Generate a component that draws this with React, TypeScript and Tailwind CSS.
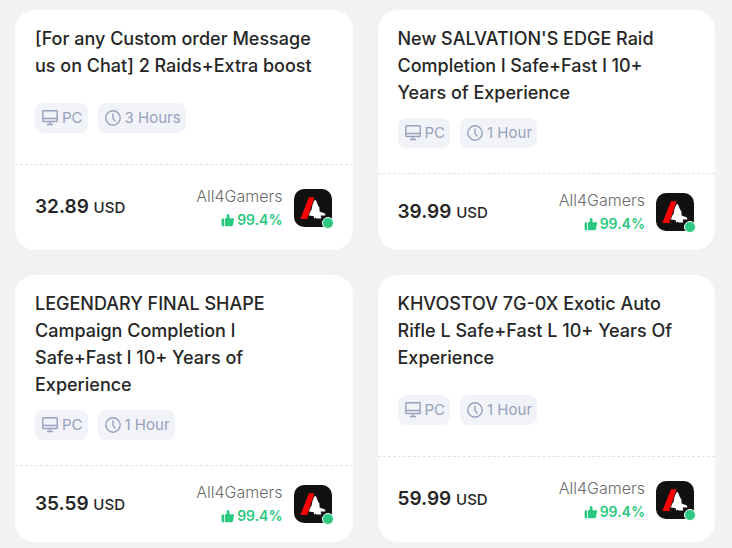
import type { ReactNode } from 'react';

interface Offer {
  title: string;
  delivery: string;
  price: string;
}

const OFFERS: Offer[] = [
  { title: '[For any Custom order Message us on Chat] 2 Raids+Extra boost', delivery: '3 Hours', price: '32.89' },
  { title: "New SALVATION'S EDGE Raid Completion l Safe+Fast l 10+ Years of Experience", delivery: '1 Hour', price: '39.99' },
  { title: 'LEGENDARY FINAL SHAPE Campaign Completion l Safe+Fast l 10+ Years of Experience', delivery: '1 Hour', price: '35.59' },
  { title: 'KHVOSTOV 7G-0X Exotic Auto Rifle L Safe+Fast L 10+ Years Of Experience', delivery: '1 Hour', price: '59.99' },
];

function MonitorIcon() {
  return (
    <svg className="size-4" viewBox="0 0 16 16" fill="none" stroke="currentColor" strokeWidth="1.4" strokeLinejoin="round" aria-hidden="true">
      <rect x="0.8" y="0.8" width="14.4" height="10.7" rx="0.6" />
      <path d="M1 8.5h14M8 11.6v2.9M5 14.5h6" />
    </svg>
  );
}

function ClockIcon() {
  return (
    <svg className="size-4" viewBox="0 0 16 16" fill="none" stroke="currentColor" strokeWidth="1.4" strokeLinecap="round" strokeLinejoin="round" aria-hidden="true">
      <circle cx="8" cy="8" r="7.2" />
      <path d="M8 4v4.4l2 2.6" />
    </svg>
  );
}

function ThumbIcon() {
  return (
    <svg className="size-3.5" viewBox="0 0 14 14" fill="currentColor" aria-hidden="true">
      <path d="M1.6 5.6h1.6v7.6H1.6a1 1 0 0 1-1-1V6.6a1 1 0 0 1 1-1z" />
      <path d="M4 5.8 5.8 4.4V2.2A1.3 1.3 0 0 1 7.1.9c.9 0 1.4.8 1.4 1.7v2.6h3.3c.9 0 1.3.7 1.2 1.5l-1 5.2c-.2.8-.8 1.3-1.6 1.3H4z" />
    </svg>
  );
}

function Avatar() {
  return (
    <div className="relative">
      <svg className="size-[38px] rounded-[10px] bg-[#111111]" viewBox="0 0 38 38" role="img" aria-label="All4Gamers logo">
        <path d="M15 8.3H20.4L13.2 30H6.3z" fill="#ff0000" />
        <path
          d="M20.4 11.2H22L23.8 16 25.4 18.4 25.6 22.4 31 24.4 31.4 26.6 26.6 26.4 27.4 29.6H22.4L21.8 28.8 20 29.6 19.8 27.2 15 26.6 15.8 23.4 17.6 20.4 18.6 15.6z"
          fill="#ffffff"
        />
      </svg>
      <span className="absolute -right-0.5 -bottom-0.5 size-3 rounded-full border border-white bg-[#2bc980]" />
    </div>
  );
}

function Tag({ icon, children }: { icon: ReactNode; children: ReactNode }) {
  return (
    <span className="flex h-[30px] items-center gap-1 rounded-lg bg-[#f2f3f8] pr-[5px] pl-[7px] text-[15px] text-[#98a1bd]">
      {icon}
      {children}
    </span>
  );
}

function OfferCard({ offer }: { offer: Offer }) {
  return (
    <article className="flex flex-col rounded-[20px] bg-white">
      <h2 className="grow-4 pt-[15px] pr-8 pb-3 pl-5 text-lg leading-[27px] font-medium">{offer.title}</h2>
      <div className="flex grow-2 items-start gap-2.5 px-5 pb-[25px]">
        <Tag icon={<MonitorIcon />}>PC</Tag>
        <Tag icon={<ClockIcon />}>{offer.delivery}</Tag>
      </div>
      <div className="flex grow-3 items-center border-t border-dashed border-[#e2e2e4] py-3.5 pr-[21px] pl-5">
        <p className="text-[19px] leading-7 font-semibold">
          {offer.price} <span className="text-[15px] font-medium">USD</span>
        </p>
        <div className="mr-[11px] ml-auto text-right">
          <p className="text-base leading-6 font-light text-[#6b6b6b]">All4Gamers</p>
          <p className="flex items-center justify-end gap-0.5 text-sm leading-6 font-semibold text-[#2bc980]">
            <ThumbIcon />
            99.4%
          </p>
        </div>
        <Avatar />
      </div>
    </article>
  );
}

export default function App() {
  return (
    <main className="grid min-h-screen grid-cols-2 content-start gap-[25px] bg-[#f2f2f5] pt-2.5 pr-[17px] pb-1.5 pl-[15px] font-['Inter',sans-serif] text-[#262626]">
      {OFFERS.map(offer => (
        <OfferCard key={offer.title} offer={offer} />
      ))}
    </main>
  );
}
